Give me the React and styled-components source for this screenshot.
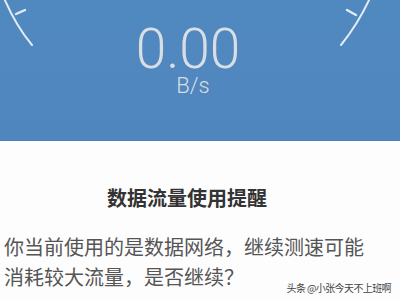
import React from 'react'
import styled, { createGlobalStyle } from 'styled-components';

const Global = createGlobalStyle`
  html, body { margin:0; padding:0; }
  body {
    width:400px;
    height:300px;
    overflow:hidden;
    background:#fdfdfd;
    font-family:"Noto Sans CJK SC", "Noto Sans", sans-serif;
  }
`

const App = () => {
  return (
    <Page>
      <Global />
      <Gauge>
        <Dial width="400" height="60" viewBox="0 0 400 60">
          <path d="M4 -2 Q16 26 32 45" stroke="#e3ebf3" strokeWidth="2" fill="none" strokeLinecap="round" />
          <path d="M16 14 L25 10" stroke="#e3ebf3" strokeWidth="2.4" strokeLinecap="round" />
          <path d="M370 -2 Q358 24 341 45" stroke="#e3ebf3" strokeWidth="2" fill="none" strokeLinecap="round" />
          <path d="M347 10 L356 15" stroke="#e3ebf3" strokeWidth="2.4" strokeLinecap="round" />
        </Dial>
        <Speed>0.00</Speed>
        <Unit>B/s</Unit>
      </Gauge>
      <Dialog>
        <Title>数据流量使用提醒</Title>
        <Message>你当前使用的是数据网络，继续测速可能<br />消耗较大流量，是否继续？</Message>
        <Mark>头条 @小张今天不上班啊</Mark>
      </Dialog>
    </Page>
  )
};

const Page = styled.div`
  width:400px;
  height:300px;
  display:flex;
  flex-direction:column;
`
const Gauge = styled.div`
  position:relative;
  height:141px;
  background:linear-gradient(#5089c0, #4f86bd);
  display:flex;
  flex-direction:column;
  align-items:center;
  padding-top:24px;
  box-sizing:border-box;
  border-bottom:1px solid #4a7fb3;
`
const Dial = styled.svg`
  position:absolute;
  left:0;
  top:0;
`
const Speed = styled.div`
  font-family:Roboto, "Noto Sans", sans-serif;
  font-weight:300;
  font-size:55px;
  line-height:50px;
  color:#d9dee4;
  margin-left:-24px;
`
const Unit = styled.div`
  font-family:Roboto, "Noto Sans", sans-serif;
  font-weight:300;
  font-size:22px;
  line-height:24px;
  color:#d9dee4;
  margin-left:-14px;
  margin-top:0;
`
const Dialog = styled.div`
  position:relative;
  flex:1;
  background:#fdfdfd;
  padding:42px 0 0 4px;
`
const Title = styled.div`
  font-size:20px;
  font-weight:700;
  color:#333;
  text-align:center;
  margin-left:-30px;
  line-height:30px;
`
const Message = styled.div`
  margin-top:19px;
  font-size:20px;
  line-height:30px;
  color:#555;
  white-space:nowrap;
`
const Mark = styled.div`
  position:absolute;
  right:9px;
  bottom:5px;
  font-size:10px;
  letter-spacing:-0.6px;
  color:#444;
`

export default App
